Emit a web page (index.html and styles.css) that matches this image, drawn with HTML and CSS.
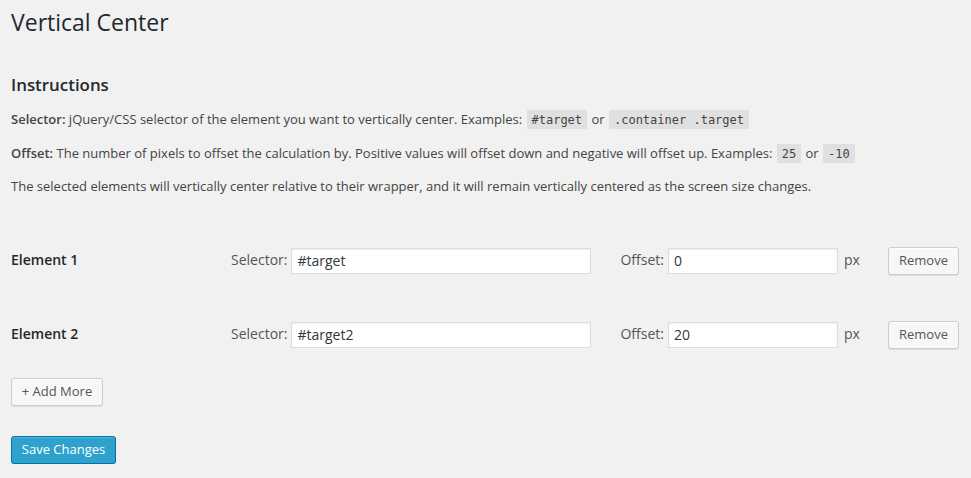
FILE: index.html
```html
<!DOCTYPE html>
<html lang="en">
<head>
<meta charset="utf-8">
<title>Vertical Center</title>
<link rel="stylesheet" href="styles.css">
</head>
<body>
<div class="wrap">
  <h1 class="page-title">Vertical Center</h1>
  <h3 class="section-title">Instructions</h3>
  <p class="info"><strong>Selector:</strong> jQuery/CSS selector of the element you want to vertically center. Examples: <code>#target</code> or <code>.container .target</code></p>
  <p class="info"><strong>Offset:</strong> The number of pixels to offset the calculation by. Positive values will offset down and negative will offset up. Examples: <code>25</code> or <code>-10</code></p>
  <p class="info">The selected elements will vertically center relative to their wrapper, and it will remain vertically centered as the screen size changes.</p>

  <form class="settings">
    <div class="rows">
      <div class="row">
        <div class="row-label">Element 1</div>
        <label class="field-label">Selector:</label>
        <input class="text-input selector-input" type="text" value="#target">
        <label class="field-label offset-label">Offset:</label>
        <input class="text-input offset-input" type="text" value="0">
        <span class="unit">px</span>
        <button type="button" class="button remove-btn">Remove</button>
      </div>
      <div class="row">
        <div class="row-label">Element 2</div>
        <label class="field-label">Selector:</label>
        <input class="text-input selector-input" type="text" value="#target2">
        <label class="field-label offset-label">Offset:</label>
        <input class="text-input offset-input" type="text" value="20">
        <span class="unit">px</span>
        <button type="button" class="button remove-btn">Remove</button>
      </div>
    </div>
    <div class="actions">
      <button type="button" class="button add-btn">+ Add More</button>
      <button type="button" class="button button-primary save-btn">Save Changes</button>
    </div>
  </form>
</div>
</body>
</html>
```

FILE: styles.css
```css
* { box-sizing: border-box; }

html, body {
  margin: 0;
  padding: 0;
  background: #f1f1f1;
}

body {
  font-family: "Open Sans", "Noto Sans", sans-serif;
  font-size: 13px;
  color: #444;
  line-height: 1.4em;
}

.wrap {
  padding: 0 12px 0 11px;
}

.page-title {
  margin: 0;
  padding: 8px 15px 4px 0;
  font-size: 23px;
  font-weight: 400;
  line-height: 29px;
  color: #23282d;
}

.section-title {
  margin: 32px 0 0;
  font-size: 16.9px;
  font-weight: 600;
  line-height: 23px;
  color: #23282d;
}

.info {
  margin: 13px 0 0;
  font-size: 13px;
  line-height: 19.5px;
  color: #444;
}

.info:first-of-type {
  margin-top: 14px;
}

.info strong {
  font-weight: 600;
}

code {
  font-family: "DejaVu Sans Mono", "Liberation Mono", monospace;
  font-size: 12px;
  background: rgba(0, 0, 0, 0.07);
  padding: 3px 5px 2px;
  margin: 0 1px;
}

.settings {
  margin-top: 27px;
}

.row {
  display: flex;
  align-items: center;
  height: 74px;
}

.row-label {
  width: 220px;
  font-size: 14px;
  font-weight: 600;
  color: #23282d;
}

.field-label {
  font-size: 14px;
  color: #555;
  margin-right: 4px;
}

.offset-label {
  margin-left: 29px;
}

.text-input {
  height: 26px;
  border: 1px solid #ddd;
  background: #fff;
  box-shadow: inset 0 1px 2px rgba(0, 0, 0, 0.07);
  font-family: "Open Sans", "Noto Sans", sans-serif;
  font-size: 14px;
  color: #32373c;
  padding: 0 5px;
  margin: 0;
  outline: none;
}

.selector-input { width: 300px; }
.offset-input { width: 170px; }

.unit {
  font-size: 14px;
  color: #555;
  margin-left: 6px;
}

.button {
  display: inline-flex;
  align-items: center;
  justify-content: center;
  height: 28px;
  padding: 0 0 1px;
  border: 1px solid #ccc;
  border-radius: 3px;
  background: #f7f7f7;
  box-shadow: inset 0 1px 0 #fff, 0 1px 0 rgba(0, 0, 0, 0.08);
  font-family: "Open Sans", "Noto Sans", sans-serif;
  font-size: 13px;
  color: #555;
  white-space: nowrap;
  cursor: pointer;
}

.remove-btn {
  margin-left: auto;
  width: 71px;
}

.actions {
  display: flex;
  flex-direction: column;
  align-items: flex-start;
  gap: 30px;
  padding-top: 6px;
}

.add-btn {
  width: 92px;
}

.button-primary {
  background: #2ea2cc;
  border-color: #0074a2;
  color: #fff;
  box-shadow: inset 0 1px 0 rgba(120, 200, 230, 0.5), 0 1px 0 rgba(0, 0, 0, 0.15);
  width: 105px;
}
```
